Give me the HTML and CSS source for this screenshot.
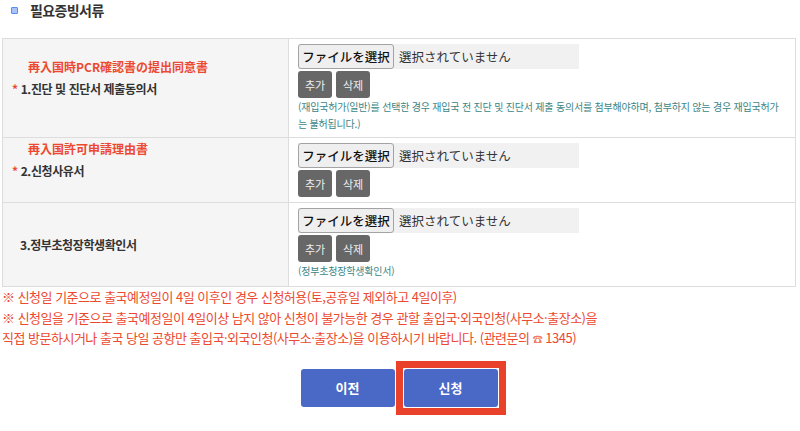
FILE: index.html
```html
<!DOCTYPE html>
<html lang="ko">
<head>
    <meta charset="utf-8">
    <title>필요증빙서류</title>
    <link rel="stylesheet" href="styles.css">
</head>
<body>
  <div class="wrap">
    <h3 class="sec-title"><span class="sec-icon"></span>필요증빙서류</h3>

    <table class="doc-table">
      <colgroup>
        <col class="col-label">
        <col>
      </colgroup>
      <tr>
        <th>
          <span class="note-jp">再入国時PCR確認書の提出同意書</span>
          <span class="req">*</span>1.진단 및 진단서 제출동의서
        </th>
        <td>
          <div class="file-box"><span class="file-btn">ファイルを選択</span><span class="file-name">選択されていません</span></div>
          <div class="btn-row"><button class="btn-sm">추가</button><button class="btn-sm">삭제</button></div>
          <p class="help">(재입국허가(일반)를 선택한 경우 재입국 전 진단 및 진단서 제출 동의서를 첨부해야하며, 첨부하지 않는 경우 재입국허가는 불허됩니다.)</p>
        </td>
      </tr>
      <tr>
        <th>
          <span class="note-jp">再入国許可申請理由書</span>
          <span class="req">*</span>2.신청사유서
        </th>
        <td>
          <div class="file-box"><span class="file-btn">ファイルを選択</span><span class="file-name">選択されていません</span></div>
          <div class="btn-row"><button class="btn-sm">추가</button><button class="btn-sm">삭제</button></div>
        </td>
      </tr>
      <tr>
        <th>3.정부초청장학생확인서</th>
        <td class="last">
          <div class="file-box"><span class="file-btn">ファイルを選択</span><span class="file-name">選択されていません</span></div>
          <div class="btn-row"><button class="btn-sm">추가</button><button class="btn-sm">삭제</button></div>
          <p class="help">(정부초청장학생확인서)</p>
        </td>
      </tr>
    </table>

    <ul class="notice">
      <li>※ 신청일 기준으로 출국예정일이 4일 이후인 경우 신청허용(토,공휴일 제외하고 4일이후)</li>
      <li>※ 신청일을 기준으로 출국예정일이 4일이상 남지 않아 신청이 불가능한 경우 관할 출입국·외국인청(사무소·출장소)을<br>직접 방문하시거나 출국 당일 공항만 출입국·외국인청(사무소·출장소)을 이용하시기 바랍니다. (관련문의 <span class="tel">☎</span> 1345)</li>
    </ul>

    <div class="actions">
      <button class="btn-main">이전</button>
      <span class="mark"><button class="btn-main">신청</button></span>
    </div>
  </div>
</body>
</html>
```

FILE: styles.css
```css
body {
    margin: 0;
    padding: 0;
    background: #fff;
    color: #333;
    font-family: "Noto Sans CJK KR", "Noto Sans CJK JP", sans-serif;
    font-size: 13px;
}

.wrap {
    width: 794px;
    padding: 0 4px 0 2px;
}

.sec-title {
    margin: 0 0 18px;
    padding-left: 9px;
    height: 20px;
    line-height: 20px;
    font-size: 14px;
    letter-spacing: -0.6px;
    font-weight: bold;
    color: #333;
    display: flex;
    align-items: center;
}

.sec-icon {
    width: 5px;
    height: 5px;
    margin-right: 12px;
    background: #a9c4fa;
    border: 1px solid #5b8cef;
    border-radius: 1px;
}

.doc-table {
    width: 100%;
    border-collapse: collapse;
    border: 1px solid #ddd;
}

.col-label {
    width: 286px;
}

.doc-table th,
.doc-table td {
    border: 1px solid #ddd;
    vertical-align: middle;
}

.doc-table th {
    position: relative;
    background: #f5f5f5;
    text-align: left;
    padding: 0 0 0 17px;
    font-size: 12px;
    letter-spacing: -0.4px;
    font-weight: bold;
    color: #333;
}

.doc-table td {
    padding: 5px 9px;
}

.doc-table td.last {
    padding-bottom: 7px;
}

.note-jp {
    position: absolute;
    left: 25px;
    top: 50%;
    margin-top: -30px;
    font-family: "Noto Sans CJK JP", sans-serif;
    font-size: 12px;
    letter-spacing: 0;
    color: #ec4a30;
}

.req {
    margin-left: -8px;
    margin-right: 3px;
    color: #ec4a30;
}

.file-box {
    display: flex;
    align-items: center;
    width: 281px;
    height: 25px;
    background: #f1f1f1;
}

.file-btn {
    box-sizing: border-box;
    width: 96px;
    height: 25px;
    line-height: 23px;
    text-align: center;
    border: 1px solid #a3a3a3;
    border-radius: 3px;
    background: #efefef;
    font-family: "Noto Sans CJK JP", sans-serif;
    font-size: 12.5px;
    font-weight: 500;
    color: #111;
}

.file-name {
    margin-left: 5px;
    font-family: "Noto Sans CJK JP", sans-serif;
    font-size: 12.5px;
    color: #333;
}

.btn-row {
    display: flex;
    gap: 4px;
    margin-top: 2px;
}

.btn-sm {
    width: 34px;
    height: 27px;
    padding: 0;
    border: 0;
    border-radius: 3px;
    background: #676767;
    color: #eee;
    font-family: "Noto Sans CJK KR", sans-serif;
    font-size: 11px;
}

.help {
    margin: 0;
    line-height: 17px;
    font-size: 10px;
    letter-spacing: -0.2px;
    color: #3b8585;
}

.notice {
    list-style: none;
    margin: 0;
    padding: 0;
    font-size: 13px;
    line-height: 20.5px;
    letter-spacing: -0.5px;
    color: #ec4a30;
}

.tel {
    font-size: 10px;
    color: #f07a66;
}

.actions {
    display: flex;
    justify-content: center;
    align-items: center;
    gap: 9px;
    margin-top: 19px;
    padding-bottom: 12px;
}

.btn-main {
    display: block;
    width: 94px;
    height: 38px;
    border: 0;
    border-radius: 3px;
    background: #4a69c7;
    color: #fff;
    font-family: "Noto Sans CJK KR", sans-serif;
    font-size: 13px;
    font-weight: bold;
}

/* red highlight box around the submit button */
.mark {
    display: block;
    margin: -8px;
    padding: 1px;
    border: 7px solid #e9412a;
}
```
